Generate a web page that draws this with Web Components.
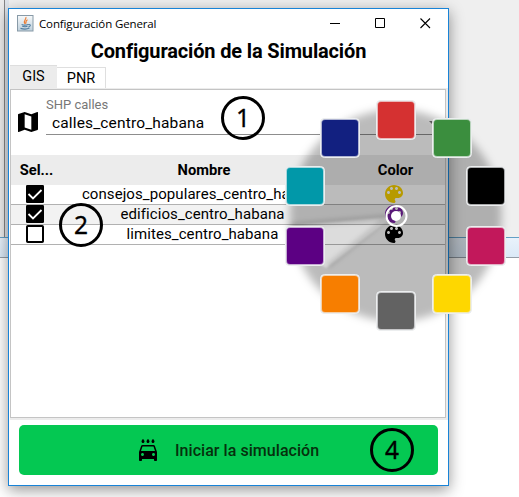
<!DOCTYPE html>
<html lang="es"><head><meta charset="utf-8"><title>Configuración General</title>
<style>
html,body{margin:0;width:519px;height:497px;overflow:hidden}
body{font-family:Roboto,"Liberation Sans",sans-serif;color:#000}
</style></head><body>
<app-desktop>
  <config-window>
    <title-bar slot="bar">Configuración General</title-bar>
    <tab-strip slot="tabs"></tab-strip>
    <shp-field label="SHP calles">calles_centro_habana</shp-field>
    <layer-table>
      <layer-row checked color="#fad200">consejos_populares_centro_habana</layer-row>
      <layer-row checked alt color="#7b22a6">edificios_centro_habana</layer-row>
      <layer-row color="#000">limites_centro_habana</layer-row>
    </layer-table>
    <start-button slot="action">Iniciar la simulación</start-button>
  </config-window>
  <color-wheel slot="over"></color-wheel>
  <step-badge slot="over" style="left:221px;top:96px">1</step-badge>
  <step-badge slot="over" style="left:59px;top:203px">2</step-badge>
  <step-badge slot="over" style="left:370px;top:428px">4</step-badge>
</app-desktop>
<script>
const define=(name,render)=>customElements.define(name,class extends HTMLElement{
  connectedCallback(){ if(!this.shadowRoot) this.attachShadow({mode:'open'}).innerHTML=render(this); }
});

define('app-desktop',()=>`<style>
:host{display:grid;grid-template:237px 21px 1fr/519px;width:519px;height:497px;position:relative;overflow:hidden;background:#fff}
.top{grid-area:1/1;background:linear-gradient(90deg,#ececec 4px,#858585 4px,#858585 5px,#dfe4ea 5px,#dfe4ea 9px,#efefef 9px)}
.strip{grid-area:2/1;box-sizing:border-box;border-top:1px solid #62a0c6;border-bottom:1px solid #949da7;background:linear-gradient(#e9f2fb,#dbe9f7)}
.win{grid-area:1/1/4/2;padding:8px;z-index:1}
</style><div class="top"></div><div class="strip"></div><div class="win"><slot></slot></div><slot name="over"></slot>`);

define('config-window',()=>`<style>
:host{display:flex;flex-direction:column;box-sizing:border-box;width:441px;height:478px;border:1px solid #1883d7;background:#fff;box-shadow:0 4px 14px rgba(0,0,0,.42)}
h1{margin:0;height:27px;line-height:27px;font-size:20px;font-weight:700;text-align:center;letter-spacing:-.15px}
.panel{display:flex;flex-direction:column;box-sizing:border-box;height:332px;margin:0 0 0 1px;border:solid #ececec;border-width:1px 2px 2px 0}
.inner{flex:1;border:1px solid #c4c4c4}
</style><slot name="bar"></slot><h1>Configuración de la Simulación</h1><slot name="tabs"></slot>
<div class="panel"><div class="inner"><slot></slot></div></div><slot name="action"></slot>`);

define('title-bar',()=>`<style>
:host{display:flex;align-items:center;height:29px;padding:0 17px 0 8px;font:11.5px "Open Sans","Noto Sans",sans-serif}
span{margin-left:5px;flex:1;white-space:nowrap;letter-spacing:-.13px}
.ctl{display:flex;gap:35px}
svg{display:block}
</style><svg width="17" height="17" viewBox="0 0 17 17"><defs><linearGradient id="g" x2="0" y2="1"><stop stop-color="#f7f9fa"/><stop offset="1" stop-color="#bed0dc"/></linearGradient></defs><rect x=".5" y=".5" width="15.5" height="15.5" fill="url(#g)" stroke="#889aa7"/><path d="M8.8 2.2C10 4 5.8 5.5 7.8 8.7M10.5 4.7C8 6 9.6 7 8.5 8.8" fill="none" stroke="#ed7c32" stroke-width="1.2"/><path d="M4.6 9.5c2 .8 5 .6 6.4-.1M5.2 11.3c2 .6 4 .5 5.3 0M3.5 13.4c3 .9 7 .7 9-.3M11.2 9.6c3-.6 2.7 1.8.2 2.4" fill="none" stroke="#527da0" stroke-width="1.1"/></svg><span><slot></slot></span>
<div class="ctl"><svg width="10" height="11"><path d="M0 5.5h10" stroke="#000"/></svg><svg width="10" height="11"><path d="M.5.5h9v9h-9z" fill="none" stroke="#000"/></svg><svg width="11" height="11"><path d="M.5.5l9.5 9.5M10 .5L.5 10" stroke="#000" stroke-width="1.1"/></svg></div>`);

define('tab-strip',()=>`<style>
:host{display:flex;align-items:flex-end;height:23px;padding-left:1px;font-size:14.5px}
div{box-sizing:border-box;text-align:center}
.a{width:47px;height:23px;line-height:21px;background:#ececec;border-top:1px solid #dedede}
.b{width:49px;height:21px;line-height:21px;border:solid #dfdfdf;border-width:1px 1px 0 0}
</style><div class="a">GIS</div><div class="b">PNR</div>`);

define('shp-field',e=>`<style>
:host{display:flex;align-items:flex-start;height:65px;box-sizing:border-box;padding:7px 10px 0 7px}
.map{margin-top:15px;margin-right:8px}
.f{flex:1;height:37px;border-bottom:1px solid #8d8d8d;display:flex;flex-direction:column}
small{font-size:13px;line-height:15px;color:#777}
.v{display:flex;align-items:center;justify-content:space-between;padding:0 0 0 6px;font-size:15.5px;line-height:22px;letter-spacing:.15px}
svg{display:block}
</style><svg class="map" width="20" height="20" viewBox="3 3 18 18"><path d="M20.5 3l-.16.03L15 5.1 9 3 3.36 4.9c-.21.07-.36.25-.36.48V20.5c0 .28.22.5.5.5l.16-.03L9 18.9l6 2.1 5.64-1.9c.21-.07.36-.25.36-.48V3.5c0-.28-.22-.5-.5-.5zM15 19l-6-2.11V5l6 2.11V19z"/></svg>
<div class="f"><small>${e.getAttribute('label')}</small><div class="v"><slot></slot><svg width="6" height="4"><path d="M0 0h6L3 3z" fill="#777"/></svg></div></div>`);

define('layer-table',()=>`<style>
:host{display:block}
.h{display:grid;grid-template-columns:51px 284px 1fr;height:30px;line-height:30px;background:#ececec;font-weight:700;font-size:14.7px;text-align:center}
</style><div class="h"><div>Sel...</div><div>Nombre</div><div>Color</div></div><slot></slot>`);

define('layer-row',e=>`<style>
:host{display:grid;grid-template-columns:48px 287px 96px;height:20px;box-sizing:border-box;border-bottom:1px solid #b1b1b1;align-items:start;justify-items:center;font-size:15px;line-height:19px;background:${e.hasAttribute('alt')?'#f2f2f2':'#fff'}}
.n{width:242px;text-align:center;white-space:nowrap;overflow:hidden;letter-spacing:.08px}
svg{display:block}
</style><svg width="18" height="18" viewBox="3 3 18 18">${e.hasAttribute('checked')?'<rect x="3" y="3" width="18" height="18" rx="1.3"/><path d="M5.5 12l4.5 4.5 8.5-8.5" fill="none" stroke="#fff" stroke-width="1.8"/>':'<rect x="4" y="4" width="16" height="16" rx=".8" fill="#fff" stroke="#000" stroke-width="2"/>'}</svg>
<div class="n"><slot></slot></div>
<svg width="18" height="18" viewBox="3 3 18 18"><path fill="${e.getAttribute('color')}" d="M12 3c-4.97 0-9 4.03-9 9s4.03 9 9 9c.83 0 1.5-.67 1.5-1.5 0-.39-.15-.74-.39-1.01-.23-.26-.38-.61-.38-.99 0-.83.67-1.5 1.5-1.5H16c2.76 0 5-2.24 5-5 0-4.42-4.03-8-9-8zm-5.5 9c-.83 0-1.5-.67-1.5-1.5S5.67 9 6.5 9 8 9.67 8 10.5 7.33 12 6.5 12zm3-4C8.67 8 8 7.33 8 6.5S8.67 5 9.5 5s1.5.67 1.5 1.5S10.33 8 9.5 8zm5 0c-.83 0-1.5-.67-1.5-1.5S13.67 5 14.5 5s1.5.67 1.5 1.5S15.33 8 14.5 8zm3 4c-.83 0-1.5-.67-1.5-1.5S16.67 9 17.5 9s1.5.67 1.5 1.5-.67 1.5-1.5 1.5z"/></svg>`);

define('start-button',()=>`<style>
:host{display:flex;align-items:center;box-sizing:border-box;width:419px;height:50px;margin:5px 0 0 10px;padding-left:120px;border-radius:5px;background:#04c852;font-size:16px;font-weight:500;color:#06300d}
svg{margin-right:18px}
span{letter-spacing:.05px}
</style><svg width="18" height="22" viewBox="3 1 18 22"><path fill="#000" d="M18.92 8.01C18.72 7.42 18.16 7 17.5 7h-11c-.66 0-1.21.42-1.42 1.01L3 14v8c0 .55.45 1 1 1h1c.55 0 1-.45 1-1v-1h12v1c0 .55.45 1 1 1h1c.55 0 1-.45 1-1v-8zM6.5 18c-.83 0-1.5-.67-1.5-1.5S5.67 15 6.5 15s1.5.67 1.5 1.5S7.33 18 6.5 18zm11 0c-.83 0-1.5-.67-1.5-1.5s.67-1.5 1.5-1.5 1.5.67 1.5 1.5-.67 1.5-1.5 1.5zM5 13l1.5-4.5h11L19 13zM7 5c.83 0 1.5-.67 1.5-1.5C8.5 2.5 7 .8 7 .8S5.5 2.5 5.5 3.5C5.5 4.33 6.17 5 7 5zm5 0c.83 0 1.5-.67 1.5-1.5C13.5 2.5 12 .8 12 .8s-1.5 1.7-1.5 2.7c0 .83.67 1.5 1.5 1.5zm5 0c.83 0 1.5-.67 1.5-1.5C18.5 2.5 17 .8 17 .8s-1.5 1.7-1.5 2.7c0 .83.67 1.5 1.5 1.5z"/></svg><span><slot></slot></span>`);

define('step-badge',()=>`<style>
:host{position:absolute;z-index:3;display:flex;align-items:center;justify-content:center;box-sizing:border-box;width:44px;height:44px;border:3px solid #000;border-radius:50%;font:24.5px/38px "Noto Sans","Open Sans",sans-serif;-webkit-text-stroke:.3px #000}
</style><slot></slot>`);

define('color-wheel',()=>{
  const sw=[[395.5,119.5,'#d53131'],[451.5,137.5,'#3b8e3e'],[485.5,185.5,'#000'],[485.5,245.5,'#c2185b'],[451.5,293.5,'#fed700'],[395.5,310.5,'#626262'],[339.5,293.5,'#f77e00'],[304.5,245.5,'#5c0083'],[304.5,185.5,'#0198a9'],[339.5,137.5,'#122080']];
  return `<style>:host{position:absolute;left:0;top:0;z-index:2;width:519px;height:497px;pointer-events:none}svg{display:block}</style>
<svg width="519" height="497"><defs><filter id="b" x="-10%" y="-10%" width="120%" height="120%"><feGaussianBlur stdDeviation="4"/></filter><filter id="s"><feGaussianBlur stdDeviation="1"/></filter><filter id="e" x="-10%" y="-20%" width="120%" height="140%"><feGaussianBlur stdDeviation="2.5"/></filter>
<mask id="m" maskUnits="userSpaceOnUse" x="270" y="90" width="249" height="249"><g filter="url(#b)"><circle cx="395.5" cy="215.5" r="106" fill="#fff"/></g><path d="M392 217L287 226Q296 249 326 268z" fill="#000" fill-opacity=".48" filter="url(#s)"/></mask></defs>
<rect x="270" y="90" width="249" height="249" fill="#000" fill-opacity=".265" mask="url(#m)"/>
<path d="M290 225L388 217L328 266" fill="none" stroke="#000" stroke-opacity=".16" stroke-width="4" filter="url(#e)"/>
<circle cx="396.5" cy="216" r="10" fill="none" stroke="#fff" stroke-width="2"/><circle cx="396" cy="216" r="5" fill="#fff"/>
${sw.map(([x,y,c])=>`<rect x="${x-19}" y="${y-19}" width="39" height="39" rx="4" fill="#dee1e4" stroke="#eceeef" stroke-width="1"/><rect x="${x-18}" y="${y-18}" width="37" height="37" rx="3.5" fill="${c}" stroke="#fff" stroke-opacity=".4"/>`).join('')}</svg>`;
});
</script></body></html>
